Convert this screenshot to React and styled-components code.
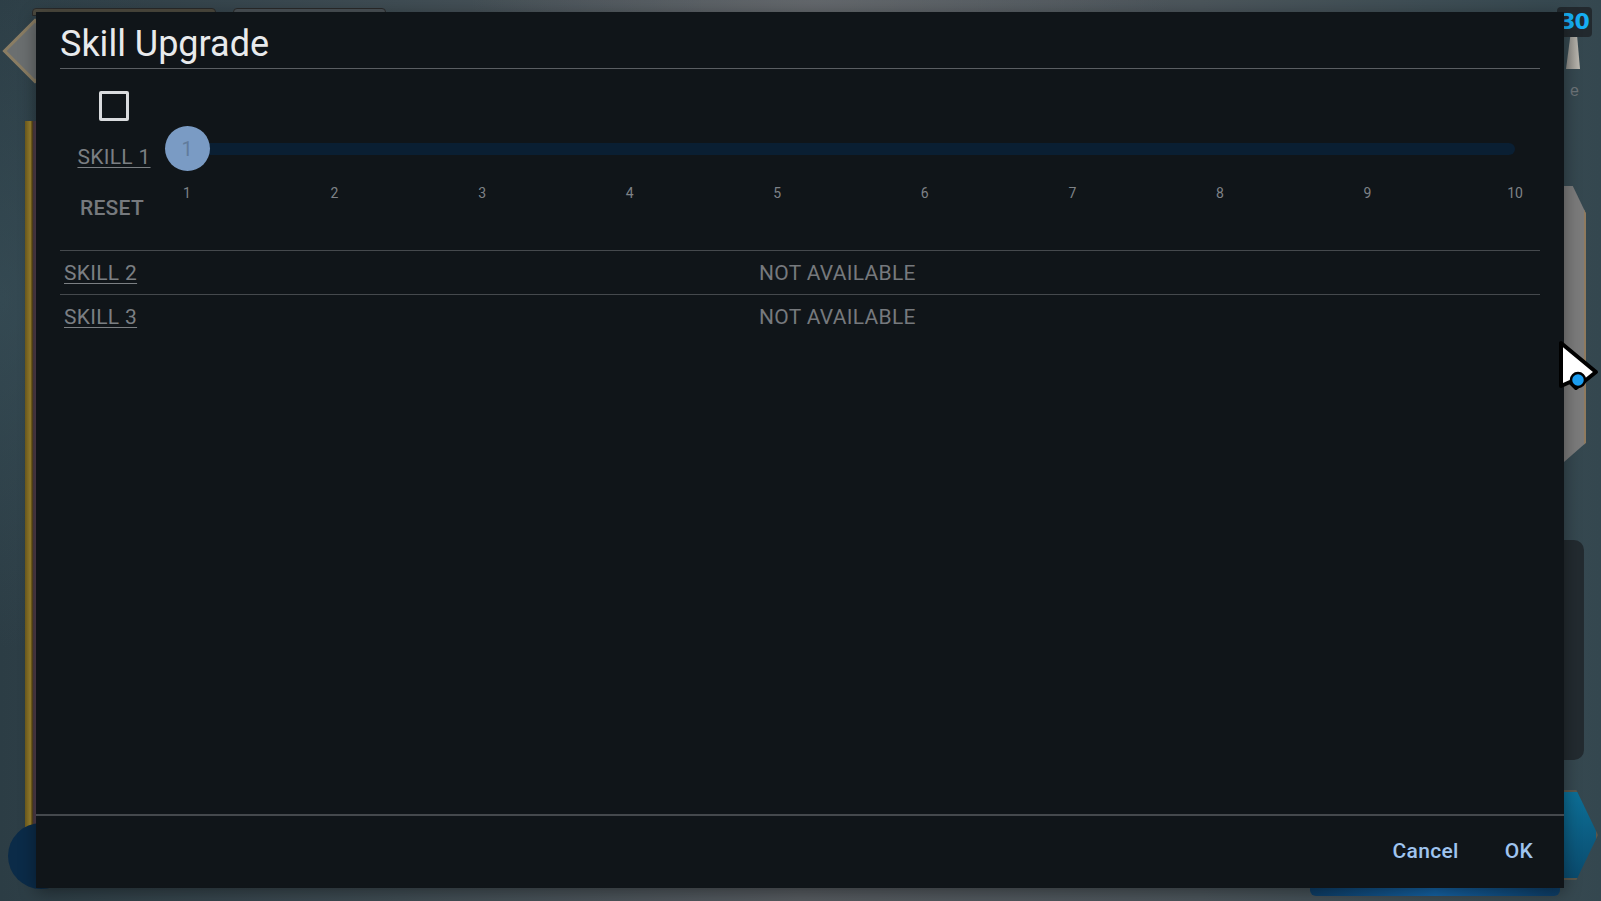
import React from "react";
import styled, { createGlobalStyle } from "styled-components";

const Global = createGlobalStyle`
  html, body { margin: 0; padding: 0; background: #1a252b; }
  body { font-family: Roboto, "Noto Sans", "Liberation Sans", sans-serif; overflow: hidden; }
  * { box-sizing: border-box; }
`;

const Screen = styled.div`
  position: relative;
  width: 1601px;
  height: 901px;
  overflow: hidden;
  padding: 12px 37px 13px 36px;
  background:
    radial-gradient(ellipse 500px 300px at 820px 0px, rgba(110,114,118,0.55), transparent 70%),
    radial-gradient(ellipse 420px 500px at 0px 300px, rgba(60,85,95,0.5), transparent 70%),
    linear-gradient(90deg, #2c3d45 0%, #3f4c53 25%, #565b60 50%, #4b555b 75%, #34474f 100%);
`;

/* background scene pieces of the game behind the dialog */
const Deco = styled.div`
  position: absolute;
`;

const TopTab = styled(Deco)`
  top: 8px;
  left: ${(p) => p.$left}px;
  width: ${(p) => p.$width}px;
  height: 8px;
  border-radius: 4px 4px 0 0;
  border: 1px solid #2a2a2a;
  background: ${(p) => p.$bg};
`;

const Chevron = styled(Deco)`
  left: 12px;
  top: 28px;
  width: 46px;
  height: 46px;
  transform: rotate(45deg);
  background: #6b6f70;
  border: 3px solid #8a7d63;
`;

const GoldFrame = styled(Deco)`
  left: 25px;
  top: 121px;
  width: 12px;
  height: 706px;
  background: linear-gradient(90deg, #6d5a1c 0%, #9c8430 45%, #5d4a12 60%, #4a3a42 70%, #5b4456 100%);
`;

const BlueCircle = styled(Deco)`
  left: 8px;
  top: 823px;
  width: 66px;
  height: 66px;
  border-radius: 50%;
  background: #0b2b48;
`;

const Badge = styled(Deco)`
  right: 9px;
  top: 7px;
  width: 35px;
  height: 30px;
  border-radius: 4px;
  background: rgba(30, 36, 40, 0.85);
  color: #16aef3;
  font: 700 22px/30px "DejaVu Sans", "Noto Sans", sans-serif;
  text-align: center;
  letter-spacing: -1px;
`;

const Pillar = styled(Deco)`
  left: 1566px;
  top: 37px;
  width: 14px;
  height: 32px;
  background: linear-gradient(90deg, #8c8b86, #bdbab2);
  clip-path: polygon(30% 0, 80% 0, 100% 100%, 0 100%);
`;

const GhostLetter = styled(Deco)`
  left: 1570px;
  top: 82px;
  color: #6d7479;
  font: 400 16px "Liberation Sans", sans-serif;
`;

const GrayHex = styled(Deco)`
  left: 1564px;
  top: 186px;
  width: 22px;
  height: 276px;
  background: #7b7b7b;
  border-right: 2px solid #8f7a5e;
  clip-path: polygon(0 0, 40% 0, 100% 10%, 100% 93%, 0 100%);
`;

const DarkPanel = styled(Deco)`
  left: 1564px;
  top: 540px;
  width: 20px;
  height: 220px;
  border-radius: 0 10px 10px 0;
  background: #232b30;
`;

const TealArrow = styled(Deco)`
  left: 1562px;
  top: 790px;
  width: 36px;
  height: 90px;
  background: linear-gradient(180deg, #0d6f96, #0a4b6e);
  border: 2px solid #5a564a;
  clip-path: polygon(0 0, 40% 0, 100% 50%, 40% 100%, 0 100%);
`;

const BottomBar = styled(Deco)`
  left: 1310px;
  top: 884px;
  width: 250px;
  height: 12px;
  background: linear-gradient(90deg, #0d3d66, #1564a6, #0d3d66);
  border-radius: 0 0 6px 6px;
`;

const Cursor = styled.svg`
  position: absolute;
  left: 1556px;
  top: 338px;
`;

const Dialog = styled.section`
  position: relative;
  width: 1528px;
  height: 876px;
  background: #101519;
  display: flex;
  flex-direction: column;
  box-shadow: 0 4px 16px rgba(0, 0, 0, 0.4);
`;

const Header = styled.header`
  padding: 11px 24px 0;
`;

const Title = styled.h1`
  margin: 0;
  font-size: 36px;
  line-height: 42px;
  font-weight: 400;
  color: #e8eaec;
  padding-bottom: 3px;
  border-bottom: 1px solid #5a5e62;
`;

const Content = styled.div`
  flex: 1;
  padding: 0 24px;
`;

const SkillSection = styled.div`
  display: grid;
  grid-template-columns: 104px 1fr;
  height: 182px;
  border-bottom: 1px solid #45494d;
`;

const SideColumn = styled.div`
  display: flex;
  flex-direction: column;
  align-items: center;
  padding-top: 22px;
`;

const CheckBox = styled.div`
  width: 30px;
  height: 30px;
  border: 3px solid #d9dbde;
  border-radius: 2px;
  margin-left: 4px;
`;

const SkillLink = styled.span`
  font-size: 21px;
  line-height: 25px;
  color: #7b7f83;
  letter-spacing: 0.3px;
  text-decoration: underline;
  text-underline-offset: 3px;
  text-decoration-thickness: 1px;
`;

const SideLink = styled(SkillLink)`
  margin-top: 24px;
  margin-left: 4px;
`;

const ResetButton = styled.span`
  margin-top: 26px;
  font-size: 21px;
  line-height: 25px;
  font-weight: 500;
  color: #76797d;
  letter-spacing: 0.3px;
`;

const SliderColumn = styled.div`
  padding: 57px 25px 0 23px;
`;

const TrackArea = styled.div`
  position: relative;
  height: 45px;
  display: flex;
  align-items: center;
`;

const Track = styled.div`
  width: 100%;
  height: 12px;
  border-radius: 6px;
  background: #0a1f33;
`;

const Thumb = styled.div`
  position: absolute;
  left: -22.5px;
  top: 0;
  width: 45px;
  height: 45px;
  border-radius: 50%;
  background: #7a9bc4;
  color: #617b9c;
  font-size: 20px;
  display: flex;
  align-items: center;
  justify-content: center;
`;

const Ticks = styled.div`
  position: relative;
  height: 17px;
  margin-top: 14px;
`;

const Tick = styled.span`
  position: absolute;
  top: 0;
  transform: translateX(-50%);
  font-size: 14px;
  line-height: 17px;
  color: #7e8287;
`;

const SkillRow = styled.div`
  display: grid;
  grid-template-columns: 695px 1fr;
  padding: 10px 0 8px 4px;
  border-bottom: ${(p) => (p.$last ? "none" : "1px solid #45494d")};
`;

const Unavailable = styled.span`
  font-size: 21px;
  line-height: 25px;
  letter-spacing: 0.3px;
  color: #76797d;
`;

const Footer = styled.footer`
  height: 74px;
  border-top: 2px solid #45494d;
  display: flex;
  justify-content: flex-end;
  align-items: center;
  gap: 46px;
  padding: 0 31px 2px 0;
`;

const ActionButton = styled.button`
  border: none;
  background: none;
  padding: 0;
  font-family: inherit;
  font-size: 21px;
  line-height: 25px;
  font-weight: 500;
  color: #9fc4ef;
  letter-spacing: 0.3px;
  cursor: pointer;
`;

const ticks = [1, 2, 3, 4, 5, 6, 7, 8, 9, 10];

export default function App() {
  return (
    <>
      <Global />
      <Screen>
        <TopTab $left={32} $width={184} $bg="#4d4a3f" />
        <TopTab $left={233} $width={153} $bg="#4a5156" />
        <Chevron />
        <GoldFrame />
        <BlueCircle />
        <Badge>30</Badge>
        <Pillar />
        <GhostLetter>e</GhostLetter>
        <GrayHex />
        <DarkPanel />
        <TealArrow />
        <BottomBar />

        <Dialog>
          <Header>
            <Title>Skill Upgrade</Title>
          </Header>
          <Content>
            <SkillSection>
              <SideColumn>
                <CheckBox />
                <SideLink>SKILL 1</SideLink>
                <ResetButton>RESET</ResetButton>
              </SideColumn>
              <SliderColumn>
                <TrackArea>
                  <Track />
                  <Thumb>1</Thumb>
                </TrackArea>
                <Ticks>
                  {ticks.map((t, i) => (
                    <Tick key={t} style={{ left: `${(i / 9) * 100}%` }}>
                      {t}
                    </Tick>
                  ))}
                </Ticks>
              </SliderColumn>
            </SkillSection>
            <SkillRow>
              <SkillLink>SKILL 2</SkillLink>
              <Unavailable>NOT AVAILABLE</Unavailable>
            </SkillRow>
            <SkillRow $last>
              <SkillLink>SKILL 3</SkillLink>
              <Unavailable>NOT AVAILABLE</Unavailable>
            </SkillRow>
          </Content>
          <Footer>
            <ActionButton>Cancel</ActionButton>
            <ActionButton>OK</ActionButton>
          </Footer>
        </Dialog>

        <Cursor width="44" height="60" viewBox="0 0 44 60">
          <path d="M5 5 L5 48 L14 44 L20 50 L40 34 Z" fill="#ffffff" stroke="#000000" strokeWidth="4" strokeLinejoin="round" />
          <circle cx="22" cy="42" r="7" fill="#1a9df0" stroke="#000" strokeWidth="2.5" />
        </Cursor>
      </Screen>
    </>
  );
}
